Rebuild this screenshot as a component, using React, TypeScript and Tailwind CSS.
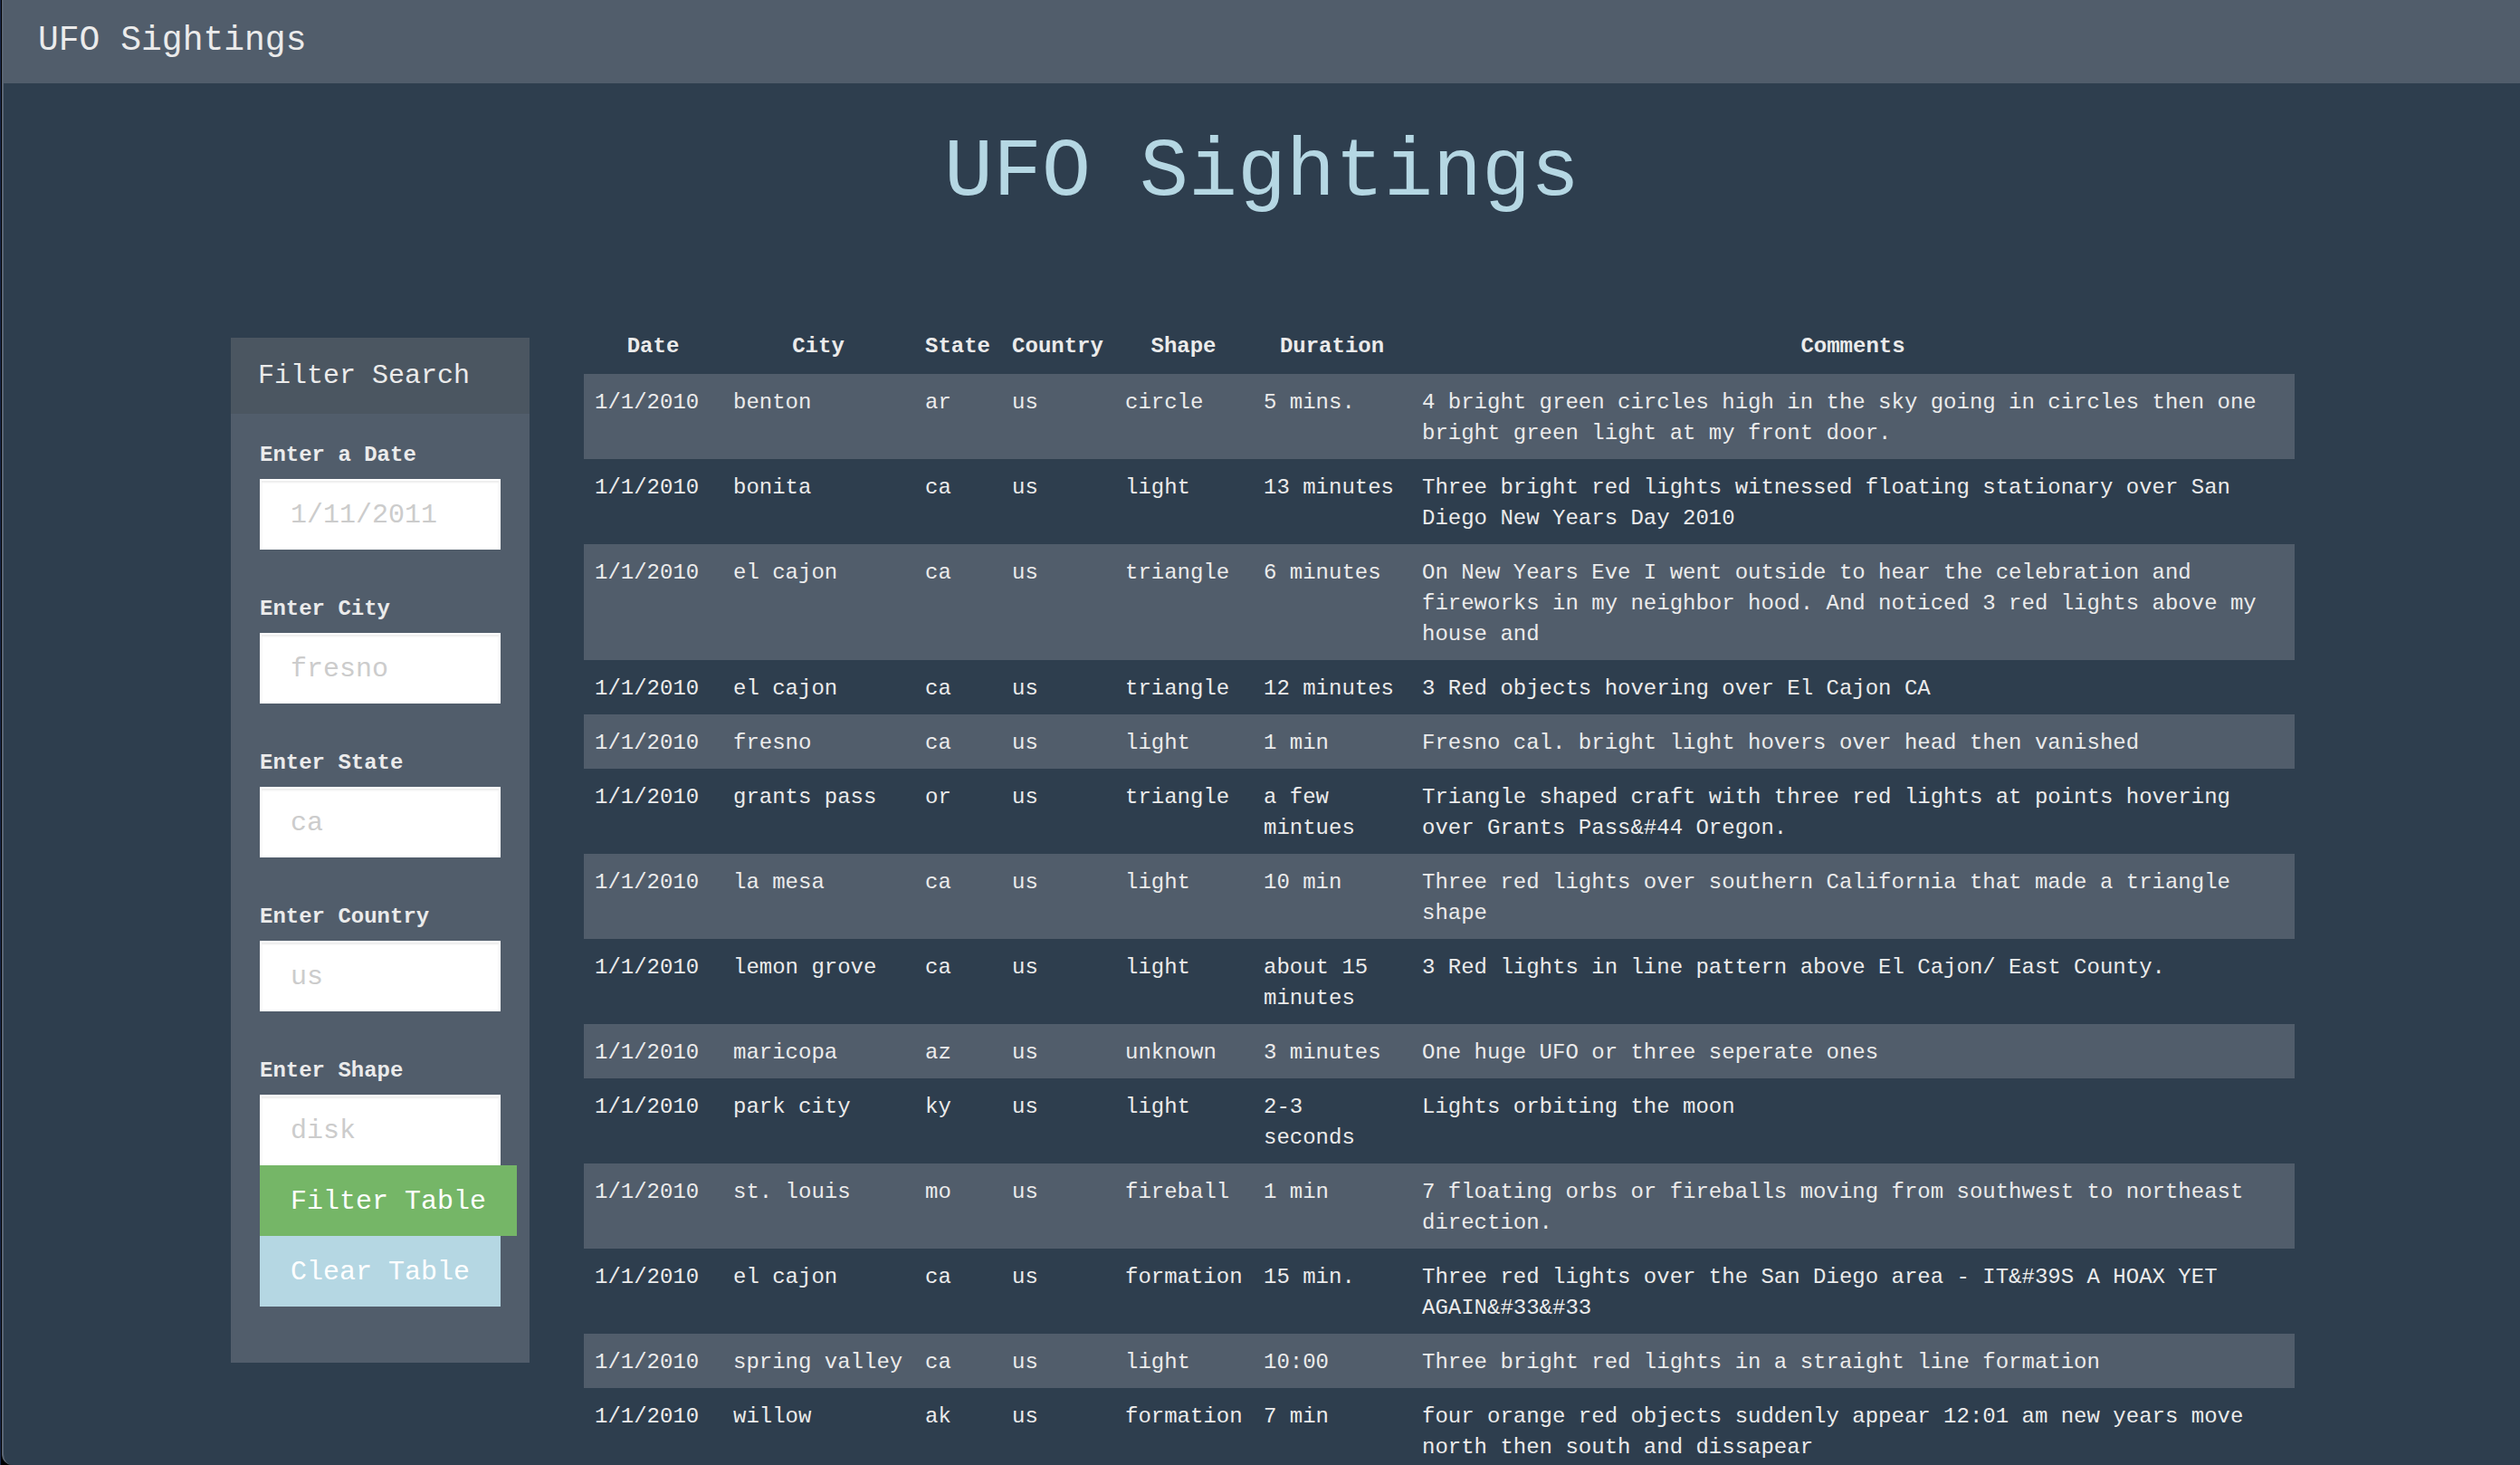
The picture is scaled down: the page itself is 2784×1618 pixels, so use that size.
import React from "react";

type Sighting = {
  date: string;
  city: string;
  state: string;
  country: string;
  shape: string;
  duration: string;
  comments: string;
};

const row = (
  city: string,
  state: string,
  shape: string,
  duration: string,
  comments: string
): Sighting => ({ date: "1/1/2010", city, state, country: "us", shape, duration, comments });

const sightings: Sighting[] = [
  row("benton", "ar", "circle", "5 mins.", "4 bright green circles high in the sky going in circles then one bright green light at my front door."),
  row("bonita", "ca", "light", "13 minutes", "Three bright red lights witnessed floating stationary over San Diego New Years Day 2010"),
  row("el cajon", "ca", "triangle", "6 minutes", "On New Years Eve I went outside to hear the celebration and fireworks in my neighbor hood. And noticed 3 red lights above my house and"),
  row("el cajon", "ca", "triangle", "12 minutes", "3 Red objects hovering over El Cajon CA"),
  row("fresno", "ca", "light", "1 min", "Fresno cal. bright light hovers over head then vanished"),
  row("grants pass", "or", "triangle", "a few mintues", "Triangle shaped craft with three red lights at points hovering over Grants Pass&#44 Oregon."),
  row("la mesa", "ca", "light", "10 min", "Three red lights over southern California that made a triangle shape"),
  row("lemon grove", "ca", "light", "about 15 minutes", "3 Red lights in line pattern above El Cajon/ East County."),
  row("maricopa", "az", "unknown", "3 minutes", "One huge UFO or three seperate ones"),
  row("park city", "ky", "light", "2-3 seconds", "Lights orbiting the moon"),
  row("st. louis", "mo", "fireball", "1 min", "7 floating orbs or fireballs moving from southwest to northeast direction."),
  row("el cajon", "ca", "formation", "15 min.", "Three red lights over the San Diego area - IT&#39S A HOAX YET AGAIN&#33&#33"),
  row("spring valley", "ca", "light", "10:00", "Three bright red lights in a straight line formation"),
  row("willow", "ak", "formation", "7 min", "four orange red objects suddenly appear 12:01 am new years move north then south and dissapear"),
];

const fields = [
  { id: "datetime", label: "Enter a Date", placeholder: "1/11/2011" },
  { id: "city", label: "Enter City", placeholder: "fresno" },
  { id: "state", label: "Enter State", placeholder: "ca" },
  { id: "country", label: "Enter Country", placeholder: "us" },
  { id: "shape", label: "Enter Shape", placeholder: "disk" },
];

const columns = [
  { title: "Date", width: "w-[153px]" },
  { title: "City", width: "w-[212px]" },
  { title: "State", width: "w-24" },
  { title: "Country", width: "w-[125px]" },
  { title: "Shape", width: "w-[153px]" },
  { title: "Duration", width: "w-[175px]" },
  { title: "Comments", width: "" },
];

function FilterPanel() {
  return (
    <aside className="mt-5 w-[330px] shrink-0 bg-[#515d6b] pb-[62px]">
      <h2 className="bg-[#4b5661] px-[30px] py-[22px] text-[30px] leading-10">Filter Search</h2>
      <form className="px-8 pt-7" onSubmit={(e) => e.preventDefault()}>
        <div className="flex flex-col gap-12">
          {fields.map((f) => (
            <div key={f.id} className="flex flex-col gap-2">
              <label htmlFor={f.id} className="text-2xl/[36px] font-bold">
                {f.label}
              </label>
              <input
                id={f.id}
                type="text"
                placeholder={f.placeholder}
                className="h-[78px] w-full border-2 border-white bg-white px-8 pt-0.5 text-[30px] text-[#555555] shadow-[inset_0_2px_2px_rgba(0,0,0,0.075)] placeholder:text-[#cccccc]"
              />
            </div>
          ))}
        </div>
        <div className="flex flex-col items-start text-[30px] leading-[76px] whitespace-nowrap text-white">
          <button type="submit" className="bg-[#75b667] px-[34px] pt-0.5">
            Filter Table
          </button>
          <button type="reset" className="bg-[#b5d7e3] px-[34px] pt-0.5">
            Clear Table
          </button>
        </div>
      </form>
    </aside>
  );
}

function SightingsTable() {
  return (
    <table className="w-full min-w-0 table-fixed text-2xl/[34px]">
      <colgroup>
        {columns.map((c) => (
          <col key={c.title} className={c.width} />
        ))}
      </colgroup>
      <thead>
        <tr>
          {columns.map((c) => (
            <th key={c.title} scope="col" className="px-3 py-[13px] font-bold">
              {c.title}
            </th>
          ))}
        </tr>
      </thead>
      <tbody>
        {sightings.map((s, i) => (
          <tr key={i} className="align-top odd:bg-[#515d6b]">
            {[s.date, s.city, s.state, s.country, s.shape, s.duration, s.comments].map((v, j) => (
              <td key={j} className="px-3 pt-[15px] pb-[11px]">
                {v}
              </td>
            ))}
          </tr>
        ))}
      </tbody>
    </table>
  );
}

export default function App() {
  return (
    <div className="h-screen overflow-hidden bg-black font-['Liberation_Mono',monospace] text-[#ebebeb]">
      <div className="h-full border-l border-[#1c2b4f] pl-px">
        <div className="h-full overflow-hidden rounded-bl-xl border-l-2 border-[#5a6573] bg-[#2e3e4e]">
          <nav className="flex h-[92px] items-start bg-[#515d6b] px-[38px] pt-[22px]">
            <a href="#" className="text-[38px] leading-[46px]">
              UFO Sightings
            </a>
          </nav>
          <h1 className="pt-[50px] text-center text-[90px] leading-[99px] text-[#b5d7e3]">UFO Sightings</h1>
          <div className="mt-28 pl-0.5">
            <main className="mx-auto flex max-w-[2280px] items-start gap-[60px]">
              <FilterPanel />
              <div className="min-w-0 flex-1">
                <SightingsTable />
              </div>
            </main>
          </div>
        </div>
      </div>
    </div>
  );
}
